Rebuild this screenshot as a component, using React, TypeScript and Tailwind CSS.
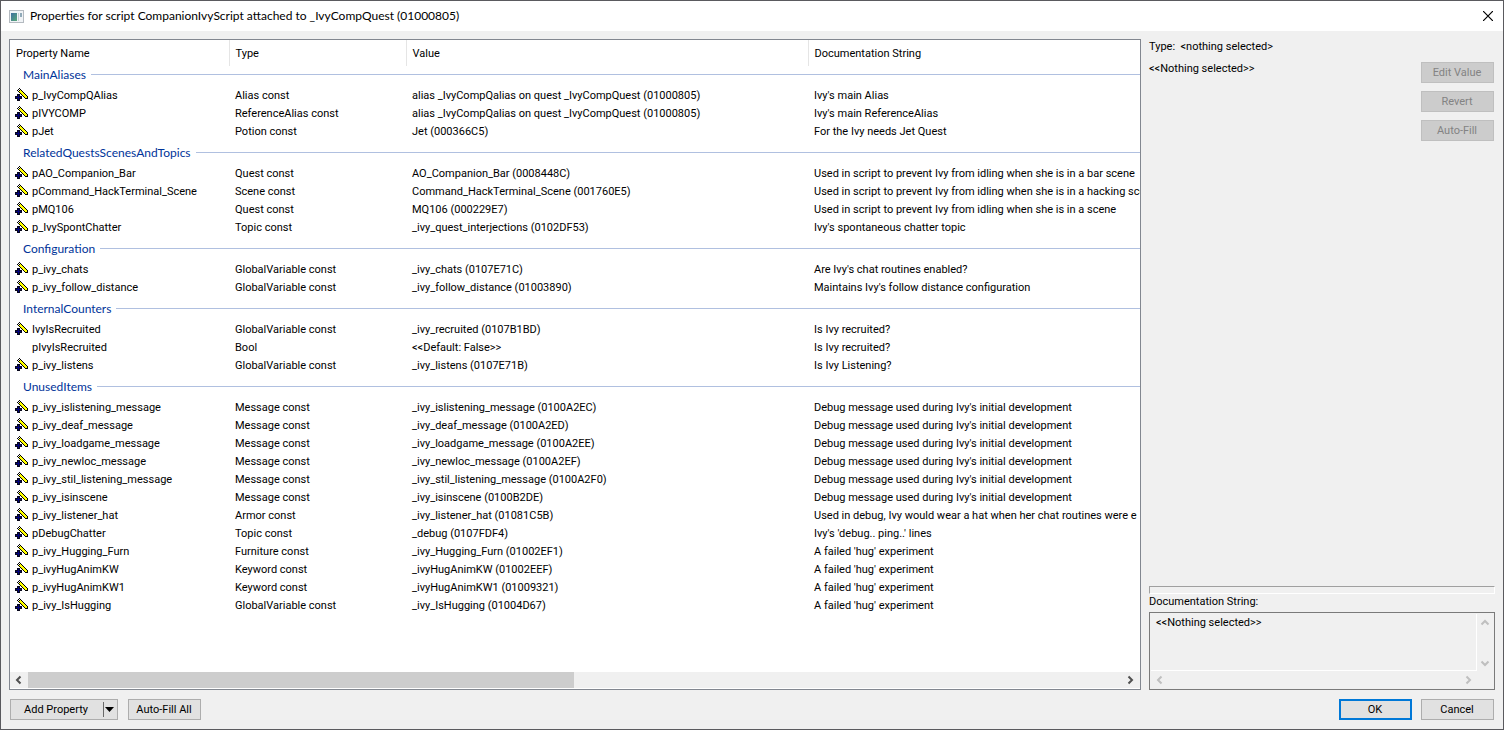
import React from "react";

type Row = { name: string; type: string; value: string; doc: string; plain?: boolean };
type Group = { title: string; rows: Row[] };

const debugDoc = "Debug message used during Ivy's initial development";
const hugDoc = "A failed 'hug' experiment";

const groups: Group[] = [
  {
    title: "MainAliases",
    rows: [
      { name: "p_IvyCompQAlias", type: "Alias const", value: "alias _IvyCompQalias on quest _IvyCompQuest (01000805)", doc: "Ivy's main Alias" },
      { name: "pIVYCOMP", type: "ReferenceAlias const", value: "alias _IvyCompQalias on quest _IvyCompQuest (01000805)", doc: "Ivy's main ReferenceAlias" },
      { name: "pJet", type: "Potion const", value: "Jet (000366C5)", doc: "For the Ivy needs Jet Quest" },
    ],
  },
  {
    title: "RelatedQuestsScenesAndTopics",
    rows: [
      { name: "pAO_Companion_Bar", type: "Quest const", value: "AO_Companion_Bar (0008448C)", doc: "Used in script to prevent Ivy from idling when she is in a bar scene" },
      { name: "pCommand_HackTerminal_Scene", type: "Scene const", value: "Command_HackTerminal_Scene (001760E5)", doc: "Used in script to prevent Ivy from idling when she is in a hacking sce" },
      { name: "pMQ106", type: "Quest const", value: "MQ106 (000229E7)", doc: "Used in script to prevent Ivy from idling when she is in a scene" },
      { name: "p_IvySpontChatter", type: "Topic const", value: "_ivy_quest_interjections (0102DF53)", doc: "Ivy's spontaneous chatter topic" },
    ],
  },
  {
    title: "Configuration",
    rows: [
      { name: "p_ivy_chats", type: "GlobalVariable const", value: "_ivy_chats (0107E71C)", doc: "Are Ivy's chat routines enabled?" },
      { name: "p_ivy_follow_distance", type: "GlobalVariable const", value: "_ivy_follow_distance (01003890)", doc: "Maintains Ivy's follow distance configuration" },
    ],
  },
  {
    title: "InternalCounters",
    rows: [
      { name: "IvyIsRecruited", type: "GlobalVariable const", value: "_ivy_recruited (0107B1BD)", doc: "Is Ivy recruited?" },
      { name: "pIvyIsRecruited", type: "Bool", value: "<<Default: False>>", doc: "Is Ivy recruited?", plain: true },
      { name: "p_ivy_listens", type: "GlobalVariable const", value: "_ivy_listens (0107E71B)", doc: "Is Ivy Listening?" },
    ],
  },
  {
    title: "UnusedItems",
    rows: [
      { name: "p_ivy_islistening_message", type: "Message const", value: "_ivy_islistening_message (0100A2EC)", doc: debugDoc },
      { name: "p_ivy_deaf_message", type: "Message const", value: "_ivy_deaf_message (0100A2ED)", doc: debugDoc },
      { name: "p_ivy_loadgame_message", type: "Message const", value: "_ivy_loadgame_message (0100A2EE)", doc: debugDoc },
      { name: "p_ivy_newloc_message", type: "Message const", value: "_ivy_newloc_message (0100A2EF)", doc: debugDoc },
      { name: "p_ivy_stil_listening_message", type: "Message const", value: "_ivy_stil_listening_message (0100A2F0)", doc: debugDoc },
      { name: "p_ivy_isinscene", type: "Message const", value: "_ivy_isinscene (0100B2DE)", doc: debugDoc },
      { name: "p_ivy_listener_hat", type: "Armor const", value: "_ivy_listener_hat (01081C5B)", doc: "Used in debug, Ivy would wear a hat when her chat routines were e" },
      { name: "pDebugChatter", type: "Topic const", value: "_debug (0107FDF4)", doc: "Ivy's 'debug.. ping..' lines" },
      { name: "p_ivy_Hugging_Furn", type: "Furniture const", value: "_ivy_Hugging_Furn (01002EF1)", doc: hugDoc },
      { name: "p_ivyHugAnimKW", type: "Keyword const", value: "_ivyHugAnimKW (01002EEF)", doc: hugDoc },
      { name: "p_ivyHugAnimKW1", type: "Keyword const", value: "_ivyHugAnimKW1 (01009321)", doc: hugDoc },
      { name: "p_ivy_IsHugging", type: "GlobalVariable const", value: "_ivy_IsHugging (01004D67)", doc: hugDoc },
    ],
  },
];

const wandPixels = [
  "....k........",
  "...k.k.......",
  "..k.kyk......",
  "...kyyyk.....",
  "....kyyyk....",
  ".....kyyyk...",
  "..nnn.kyyyk..",
  "..nbn..kyyyk.",
  "nnnbnnn.kyyyk",
  "nbbbbbn..kyyk",
  "nnnbnnn...kkk",
  "..nbn........",
  "..nnn........",
];
const wandColors: Record<string, string> = { k: "#000000", n: "#08081c", b: "#000080", y: "#ffff00" };

function WandIcon() {
  return (
    <svg width="13" height="13" viewBox="0 0 13 13" shapeRendering="crispEdges" className="shrink-0" aria-hidden="true">
      {wandPixels.flatMap((line, y) =>
        [...line].map((c, x) => (c === "." ? null : <rect key={`${x}-${y}`} x={x} y={y} width="1" height="1" fill={wandColors[c]} />)),
      )}
    </svg>
  );
}

function Chevron({ dir }: { dir: "left" | "right" | "up" | "down" }) {
  const paths = {
    left: "M6.500 1.500 3 5l3.500 3.500",
    right: "M3.500 1.500 7 5l-3.500 3.500",
    up: "M1.500 6.500 5 3l3.500 3.500",
    down: "M1.500 3.500 5 7l3.500-3.500",
  };
  return (
    <svg width="10" height="10" viewBox="0 0 10 10" aria-hidden="true">
      <path d={paths[dir]} fill="none" stroke="currentColor" strokeWidth="2" />
    </svg>
  );
}

const headCell = "h-[26px] p-0 pl-[6px] pt-[2px] text-left font-normal";
const cell = "h-[18px] whitespace-nowrap p-0 pl-[6px] pt-[2px]";

function PropertyTable() {
  return (
    <table className="w-full table-fixed border-collapse leading-[16px]">
      <colgroup>
        <col className="w-[219px]" />
        <col className="w-[177px]" />
        <col className="w-[402px]" />
        <col />
      </colgroup>
      <thead>
        <tr>
          <th scope="col" className={headCell}>Property Name</th>
          <th scope="col" className={`${headCell} border-l border-[#e5e5e5]`}>Type</th>
          <th scope="col" className={`${headCell} border-l border-[#e5e5e5]`}>Value</th>
          <th scope="col" className={`${headCell} border-l border-[#e5e5e5]`}>Documentation String</th>
        </tr>
      </thead>
      {groups.map((g) => (
        <tbody key={g.title}>
          <tr>
            <th colSpan={4} scope="rowgroup" className="h-[20px] p-0 pl-[13px] text-left align-top font-normal">
              <div className="flex h-[17px] items-center gap-[5px] font-[Lato,sans-serif] text-[12px] text-[#003399]">
                <span>{g.title}</span>
                <span className="h-px flex-1 bg-[#b0c0e0]" />
              </div>
            </th>
          </tr>
          {g.rows.map((r) => (
            <tr key={r.name}>
              <td className="h-[18px] whitespace-nowrap p-0 pl-[5px] pt-[2px]">
                <div className="flex items-start gap-[4px]">
                  {r.plain ? <span className="w-[13px]" /> : <WandIcon />}
                  <span>{r.name}</span>
                </div>
              </td>
              <td className={cell}>{r.type}</td>
              <td className={cell}>{r.value}</td>
              <td className={cell}>{r.doc}</td>
            </tr>
          ))}
          <tr aria-hidden="true">
            <td colSpan={4} className="h-[4px] p-0" />
          </tr>
        </tbody>
      ))}
    </table>
  );
}

const button = "h-[21px] w-[73px] border border-[#adadad] bg-[#e1e1e1] pt-px pr-px text-center";
const disabledButton = "h-[21px] w-[73px] border border-[#bfbfbf] bg-[#cccccc] pt-px pr-px text-center text-[#838383]";

export default function App() {
  return (
    <div className="flex min-h-screen flex-col border border-[#5a5a5e] bg-[#f0f0f0] font-[Roboto,sans-serif] text-[11px] leading-[14px] text-black">
      <header className="flex h-[30px] items-center bg-white pl-[8px] pr-[10px]">
        <svg width="15" height="13" viewBox="0 0 15 13" aria-hidden="true">
          <defs>
            <linearGradient id="pane" x1="0" y1="0" x2="1" y2="1">
              <stop offset="0" stopColor="#3f6fa0" />
              <stop offset="1" stopColor="#58a878" />
            </linearGradient>
          </defs>
          <rect x="0.5" y="0.5" width="14" height="12" fill="#f0f3f6" stroke="#b4bac0" />
          <rect x="2" y="3" width="6" height="8" fill="url(#pane)" />
          <rect x="9" y="3" width="1" height="8" fill="#c5ccd2" />
          <rect x="11" y="3" width="2" height="4" fill="#8fa9b8" />
        </svg>
        <h1 className="ml-[6px] font-[Lato,sans-serif] text-[12px]">
          Properties for script CompanionIvyScript attached to _IvyCompQuest (01000805)
        </h1>
        <button type="button" aria-label="Close" className="ml-auto">
          <svg width="10" height="10" viewBox="0 0 10 10" aria-hidden="true">
            <path d="M0 0l10 10M10 0L0 10" stroke="#000" strokeWidth="1.200" />
          </svg>
        </button>
      </header>

      <div className="flex flex-1 gap-[8px] px-[8px] pt-[8px]">
        <main className="flex min-w-0 flex-1 flex-col border border-[#828790] bg-white pb-px">
          <div className="flex-1 overflow-hidden">
            <PropertyTable />
          </div>
          <div className="flex h-[16px] items-center bg-[#f0f0f0]">
            <button type="button" aria-label="Scroll left" className="flex w-[18px] justify-center text-[#505050]">
              <Chevron dir="left" />
            </button>
            <div className="h-full flex-1">
              <div className="h-full w-1/2 bg-[#cdcdcd]" />
            </div>
            <button type="button" aria-label="Scroll right" className="flex w-[20px] justify-center text-[#505050]">
              <Chevron dir="right" />
            </button>
          </div>
        </main>

        <aside className="flex w-[346px] flex-col">
          <div className="flex justify-between pr-px">
            <div className="flex flex-col gap-[8px] pt-px">
              <p>Type: &nbsp;&lt;nothing selected&gt;</p>
              <p>&lt;&lt;Nothing selected&gt;&gt;</p>
            </div>
            <div className="flex flex-col gap-[8px] pt-[23px]">
              <button type="button" disabled className={disabledButton}>Edit Value</button>
              <button type="button" disabled className={disabledButton}>Revert</button>
              <button type="button" disabled className={disabledButton}>Auto-Fill</button>
            </div>
          </div>
          <div className="mt-auto h-[8px] border border-[#a0a0a0] border-b-white border-r-white" />
          <label htmlFor="doc" className="pb-[3px] pt-px">Documentation String:</label>
          <div className="flex h-[78px] border border-[#7a7a7a] p-px">
            <div className="flex flex-1 flex-col">
              <textarea id="doc" readOnly className="block flex-1 resize-none overflow-hidden border-b border-r border-white px-[5px] pt-[2px] outline-none" defaultValue="<<Nothing selected>>" />
              <div className="flex h-[17px] items-center justify-between px-[4px] text-[#bfbfbf]">
                <Chevron dir="left" />
                <Chevron dir="right" />
              </div>
            </div>
            <div className="flex w-[16px] flex-col items-center justify-between pb-[20px] pt-[4px] text-[#bfbfbf]">
              <Chevron dir="up" />
              <Chevron dir="down" />
            </div>
          </div>
        </aside>
      </div>

      <footer className="flex items-center justify-between p-[9px]">
        <div className="flex gap-[10px]">
          <div className="flex h-[21px] border border-[#adadad] bg-[#e1e1e1]">
            <button type="button" className="w-[92px] pr-[2px] pt-px">Add Property</button>
            <button type="button" aria-label="More add options" className="my-[2px] flex w-[14px] items-center justify-start border-l border-[#696969] pl-px">
              <svg width="9" height="5" viewBox="0 0 9 5" aria-hidden="true"><path d="M0 0h9L4.500 5z" /></svg>
            </button>
          </div>
          <button type="button" className={button}>Auto-Fill All</button>
        </div>
        <div className="flex gap-[9px]">
          <button type="button" className="h-[21px] w-[73px] border-2 border-[#0078d7] bg-[#e1e1e1] pr-px pt-px text-center">OK</button>
          <button type="button" className={button}>Cancel</button>
        </div>
      </footer>
    </div>
  );
}
